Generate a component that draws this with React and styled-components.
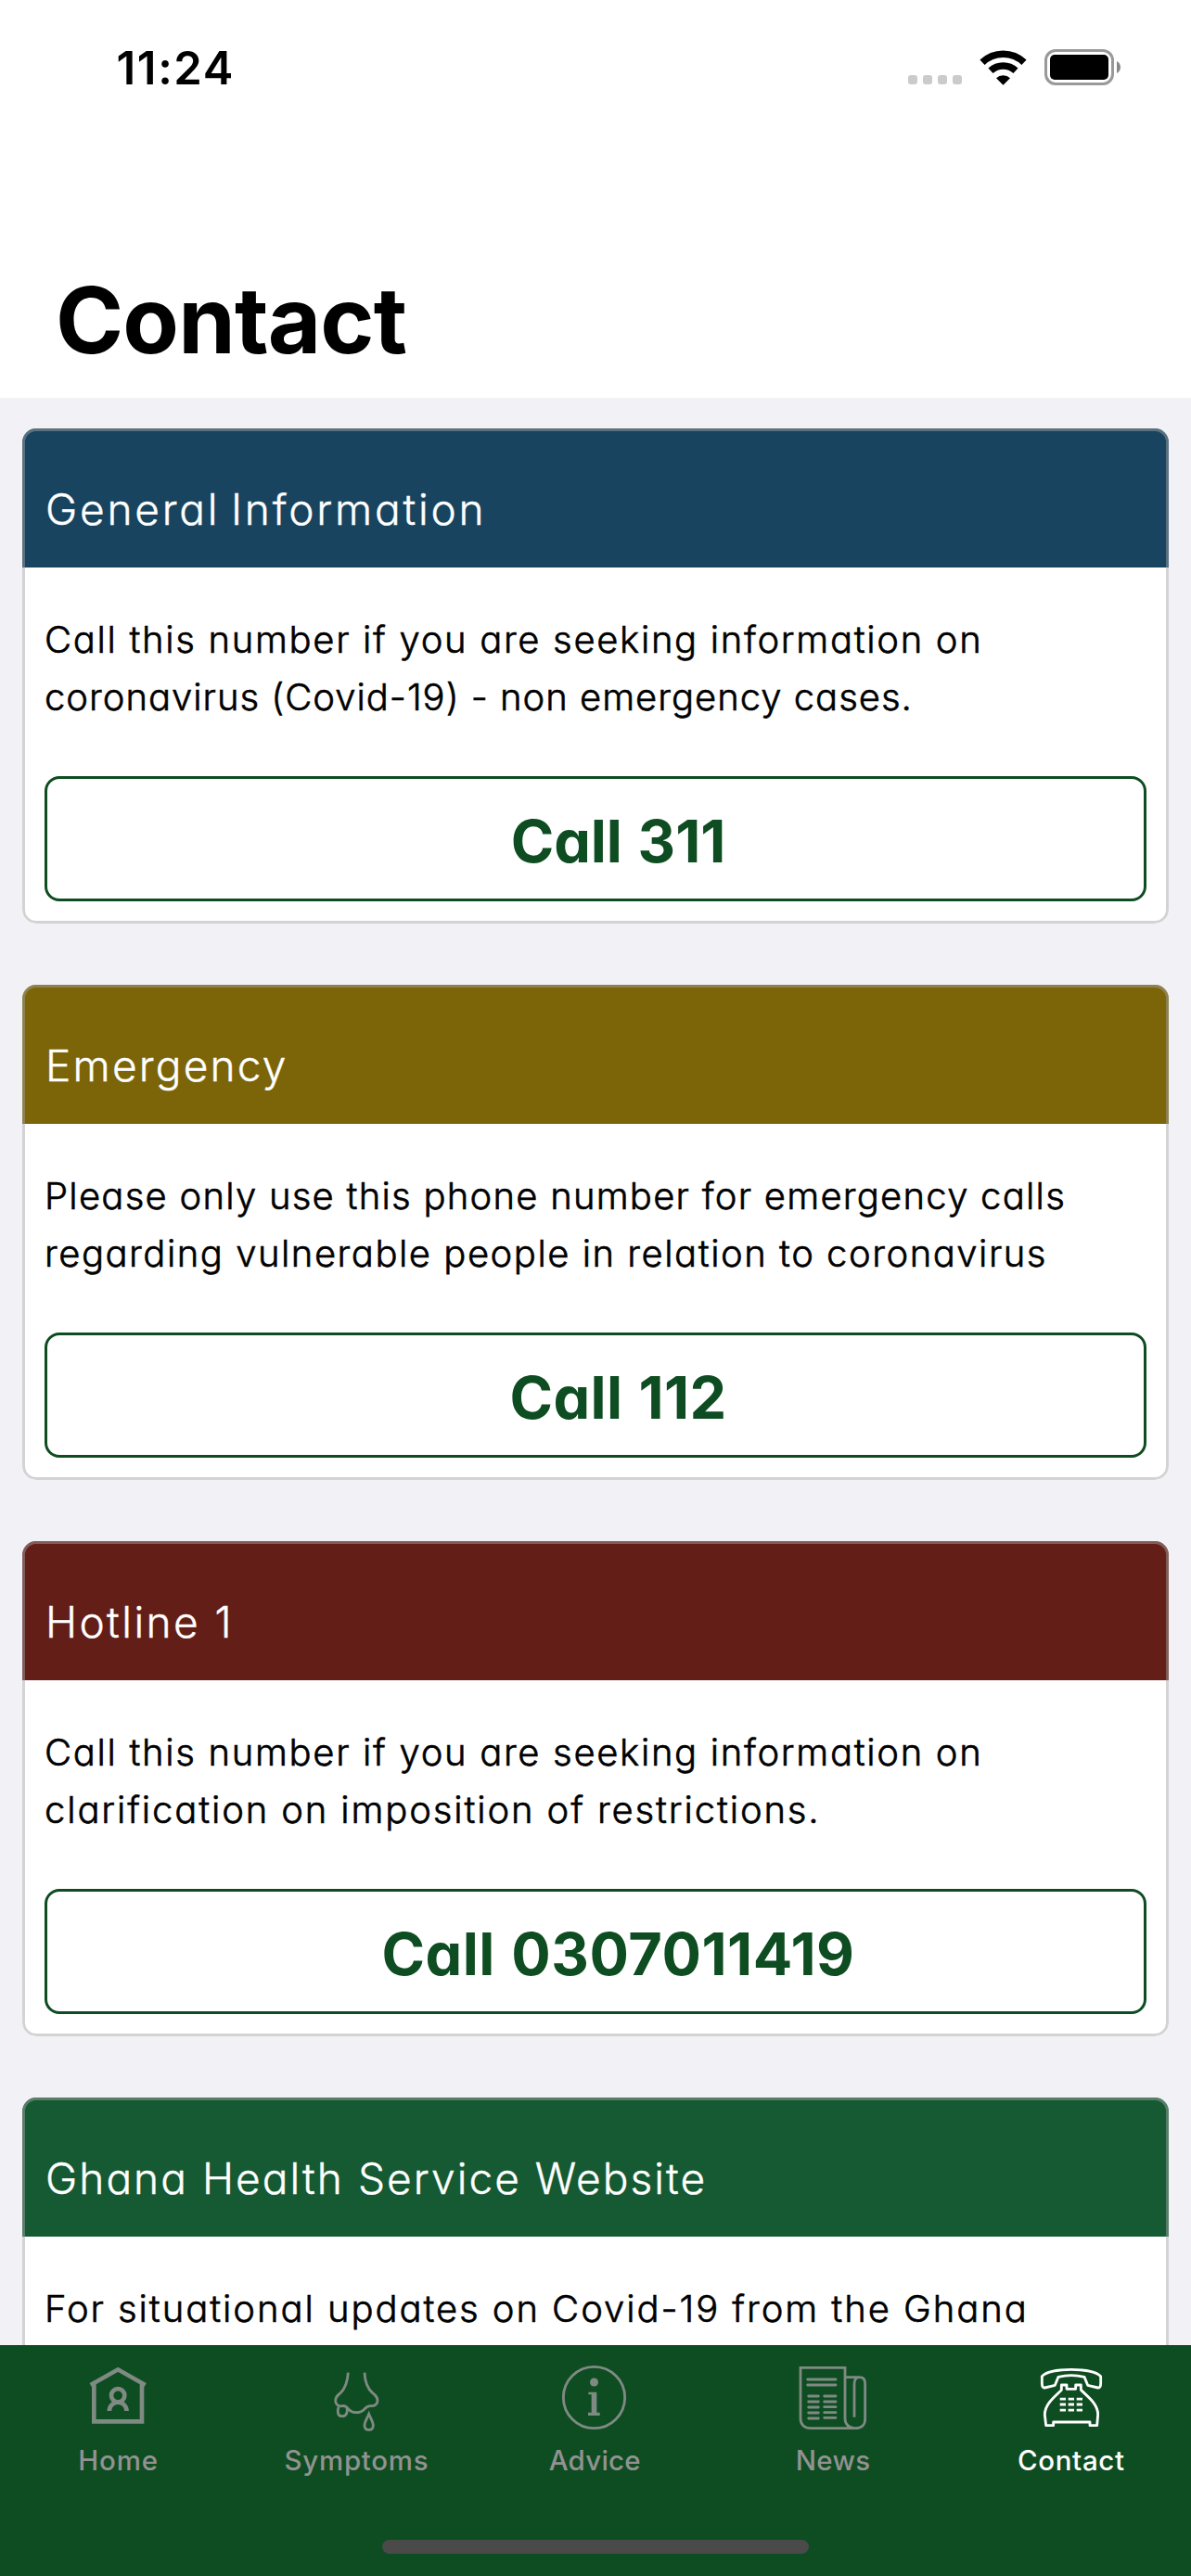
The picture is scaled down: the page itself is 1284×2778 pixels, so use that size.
import React from "react";
import styled, { createGlobalStyle } from "styled-components";

const GlobalStyle = createGlobalStyle`
  *, *::before, *::after { box-sizing: border-box; }
  body { margin: 0; background: #f2f1f6; }
`;

const Screen = styled.div`
  width: 1284px;
  height: 2778px;
  overflow: hidden;
  display: flex;
  flex-direction: column;
  background: #f2f1f6;
  color: #000;
  font-family: Inter, "Liberation Sans", sans-serif;
`;

const Header = styled.header`
  flex: 0 0 429px;
  background: #fff;
  display: flex;
  flex-direction: column;
  justify-content: space-between;
`;

const StatusBar = styled.div`
  display: flex;
  justify-content: space-between;
  align-items: flex-start;
  padding: 43px 75px 0 125.500px;
`;

const Time = styled.span`
  font-size: 49px;
  font-weight: 600;
  line-height: 61px;
  letter-spacing: 1.6px;
`;

const StatusIcons = styled.div`
  display: flex;
  align-items: center;
  gap: 19px;
  padding-top: 10px;
`;

const Dots = styled.div`
  display: flex;
  gap: 6px;
  align-self: flex-end;
  padding-bottom: 1px;
`;

const Dot = styled.i`
  width: 10px;
  height: 10px;
  border-radius: 3px;
  background: #cbcbcb;
`;

const Title = styled.h1`
  margin: 0;
  padding: 0 0 23px 60px;
  font-size: 99px;
  font-weight: 700;
  line-height: 122px;
  letter-spacing: -0.9px;
`;

const List = styled.main`
  flex: 1 1 0;
  min-height: 0;
  overflow: hidden;
  padding: 33px 24px 0;
  display: flex;
  flex-direction: column;
  gap: 66px;
  font-feature-settings: "cv11" 1;
`;

const Card = styled.section`
  position: relative;
  flex: none;
  height: 534px;
  border-radius: 15px;
  overflow: hidden;
  background: #fff;

  &::after {
    content: "";
    position: absolute;
    inset: 0;
    border: 3px solid rgba(163, 163, 163, 0.48);
    border-radius: inherit;
    pointer-events: none;
  }
`;

const CardTitle = styled.h2`
  height: 150px;
  margin: 0;
  padding: 57px 25px 0;
  background: ${(p) => p.$tone};
  color: #fff;
  font-size: 46px;
  font-weight: 300;
  line-height: 60px;
  letter-spacing: ${(p) => p.$spacing}px;
  word-spacing: ${(p) => p.$wordSpacing || 0}px;
  -webkit-text-stroke: 0.4px currentColor;
`;

const CardBody = styled.div`
  display: flex;
  flex-direction: column;
  gap: 54px;
  padding: 47px 24px 0;
`;

const Description = styled.p`
  margin: 0;
  font-size: 40px;
  font-weight: 300;
  line-height: 62px;
  white-space: nowrap;
  -webkit-text-stroke: 0.6px currentColor;
`;

const Line = styled.span`
  display: block;
  letter-spacing: ${(p) => p.$spacing}px;
`;

const CallButton = styled.button`
  width: 100%;
  height: 135px;
  padding: 5px 0 0 49px;
  border: 3px solid #0e4c21;
  border-radius: 16px;
  background: #fff;
  color: #0e4c21;
  font: inherit;
  font-feature-settings: inherit;
  font-size: 63px;
  font-weight: 700;
  letter-spacing: ${(p) => p.$spacing}px;
  word-spacing: 2px;
`;

const TabBar = styled.nav`
  flex: 0 0 249px;
  display: flex;
  flex-wrap: wrap;
  justify-content: center;
  align-content: space-between;
  padding: 21px 0 24px;
  background: #0e4c21;
`;

const Tab = styled.div`
  flex: 0 0 20%;
  display: flex;
  flex-direction: column;
  align-items: center;
  gap: 13px;
  color: ${(p) => (p.$active ? "#fff" : "#7f8a83")};
`;

const TabLabel = styled.span`
  padding-right: 1.500px;
  font-size: 29.500px;
  font-weight: 500;
  line-height: 36px;
  letter-spacing: ${(p) => p.$spacing}px;
  color: ${(p) => (p.$active ? "#fff" : "#929292")};
`;

const TabIcon = styled.svg`
  width: 72px;
  height: 72px;
  overflow: visible;
  fill: none;
  stroke: currentColor;
  stroke-width: ${(p) => p.$weight || 8.5};
`;

const HomeIndicator = styled.div`
  width: 460px;
  height: 15px;
  border-radius: 8px;
  background: #4a4a4a;
`;

const WifiIcon = () => (
  <svg width="51" height="38" viewBox="0 0 51 38" fill="none" stroke="#000" strokeWidth="7.500">
    <path d="M3 13.300A32.500 32.500 0 0 1 48 13.300" />
    <path d="M12 22.300A19.800 19.800 0 0 1 39 22.300" />
    <path d="M18 30.300a11 11 0 0 1 15 0L25.500 37.700z" fill="#000" stroke="none" />
  </svg>
);

const BatteryIcon = () => (
  <svg width="83" height="39" viewBox="0 0 83 39">
    <rect x="1.500" y="1.500" width="72" height="36" rx="10.500" fill="none" stroke="#999" strokeWidth="3" />
    <rect x="6" y="6" width="63" height="27" rx="5" />
    <path d="M78 13c5.300 2.400 5.300 10.600 0 13z" fill="#888" />
  </svg>
);

const HomeIcon = () => (
  <TabIcon viewBox="97 60 216 216" $weight={14}>
    <path d="M125 122V244H280V122M114 126 202.500 76 291 126" />
    <circle cx="202.500" cy="160" r="21.500" />
    <path d="M174.500 210a28 28 0 0 1 56 0" />
  </TabIcon>
);

const SymptomsIcon = () => (
  <TabIcon viewBox="868 60 216 216" $weight={8.5}>
    <path d="M947 86C945 115 935 140 922 152 912 160 906 165 906 177 906 190 916 196 927 194 940 191 944 200 950 206 962 218 985 218 997 207 1003 201 1006 193 1020 194 1034 195 1042 187 1042 176 1042 165 1036 160 1026 152 1010 138 1001 112 1000 86" />
    <path d="M916 197C910 212 914 228 928 227 942 227 946 213 943 200M1014 220C1008 235 1000 245 1000 257 1000 266 1006 271 1014 271 1022 271 1028 266 1028 257 1028 245 1020 235 1014 220Z" />
  </TabIcon>
);

const AdviceIcon = () => (
  <TabIcon viewBox="138 60 216 216">
    <circle cx="241.500" cy="166.500" r="99.500" />
    <g fill="currentColor" stroke="none">
      <circle cx="241.500" cy="117" r="13.500" />
      <path d="M223 149h27v66h10v10h-38v-10h11v-58h-10z" />
    </g>
  </TabIcon>
);

const NewsIcon = () => (
  <TabIcon viewBox="908 60 216 216">
    <path d="M908 70H1052V235C1052 254 1066 266 1085 266 1106 266 1117 254 1117 236V122C1117 108 1110 101 1099 101 1088 101 1082 110 1082 122V230M908 66V235C908 255 922 266 940 266H1086M1052 101H1100" />
    <path
      strokeLinecap="round"
      d="M931 108h91M931 126h91M934 162h32M934 180h32M934 198h32M934 216h32M934 234h32M985 162h37M985 180h37M985 197h37M985 215h37M985 232h37"
    />
  </TabIcon>
);

const ContactIcon = () => (
  <TabIcon viewBox="239 60 216 216" strokeLinejoin="round">
    <path d="M249 98C275 69 412 69 439 98V120Q439 136 430 135L397 127 386 100Q344 90 302 100L291 127 258 135Q249 136 249 120Z" />
    <path d="M312 126H329V139H358V126H375V142C392 160 430 185 430 222L427 257H404V246H286V257H262L258 222C258 185 296 160 312 142Z" />
    <path d="M307 171.500h19m8 0h19m8 0h19M307 189h19m8 0h19m8 0h19M307 207.500h19m8 0h19m8 0h19" />
  </TabIcon>
);

const cards = [
  {
    title: "General Information", titleSpacing: 2.78, wordSpacing: -4, tone: "#18445f",
    lines: [
      ["Call this number if you are seeking information on", 1.67],
      ["coronavirus (Covid-19) - non emergency cases.", 0.98],
    ],
    action: "Call 311", actionSpacing: -0.1,
  },
  {
    title: "Emergency", titleSpacing: 2.2, tone: "#7c6508",
    lines: [
      ["Please only use this phone number for emergency calls", 1.24],
      ["regarding vulnerable people in relation to coronavirus", 1.51],
    ],
    action: "Call 112", actionSpacing: 0.3,
  },
  {
    title: "Hotline 1", titleSpacing: 2.4, tone: "#631e17",
    lines: [
      ["Call this number if you are seeking information on", 1.67],
      ["clarification on imposition of restrictions.", 1.86],
    ],
    action: "Call 0307011419", actionSpacing: 0.5,
  },
  {
    title: "Ghana Health Service Website", titleSpacing: 2.04, tone: "#165a33",
    lines: [["For situational updates on Covid-19 from the Ghana", 1.93]],
  },
];

const tabs = [
  { label: "Home", icon: HomeIcon, spacing: 0.9 },
  { label: "Symptoms", icon: SymptomsIcon, spacing: 0.7 },
  { label: "Advice", icon: AdviceIcon, spacing: 0.2 },
  { label: "News", icon: NewsIcon, spacing: 0.3 },
  { label: "Contact", icon: ContactIcon, spacing: 0.65, active: true },
];

export default function App() {
  return (
    <>
      <GlobalStyle />
      <Screen>
        <Header>
          <StatusBar>
            <Time>11:24</Time>
            <StatusIcons>
              <Dots>
                <Dot /><Dot /><Dot /><Dot />
              </Dots>
              <WifiIcon />
              <BatteryIcon />
            </StatusIcons>
          </StatusBar>
          <Title>Contact</Title>
        </Header>
        <List>
          {cards.map((card) => (
            <Card key={card.title}>
              <CardTitle $tone={card.tone} $spacing={card.titleSpacing} $wordSpacing={card.wordSpacing}>
                {card.title}
              </CardTitle>
              <CardBody>
                <Description>
                  {card.lines.map(([text, spacing]) => (
                    <Line key={text} $spacing={spacing}>{text}</Line>
                  ))}
                </Description>
                {card.action && <CallButton $spacing={card.actionSpacing}>{card.action}</CallButton>}
              </CardBody>
            </Card>
          ))}
        </List>
        <TabBar>
          {tabs.map(({ label, icon: Icon, spacing, active }) => (
            <Tab key={label} $active={active}>
              <Icon />
              <TabLabel $active={active} $spacing={spacing}>{label}</TabLabel>
            </Tab>
          ))}
          <HomeIndicator />
        </TabBar>
      </Screen>
    </>
  );
}
